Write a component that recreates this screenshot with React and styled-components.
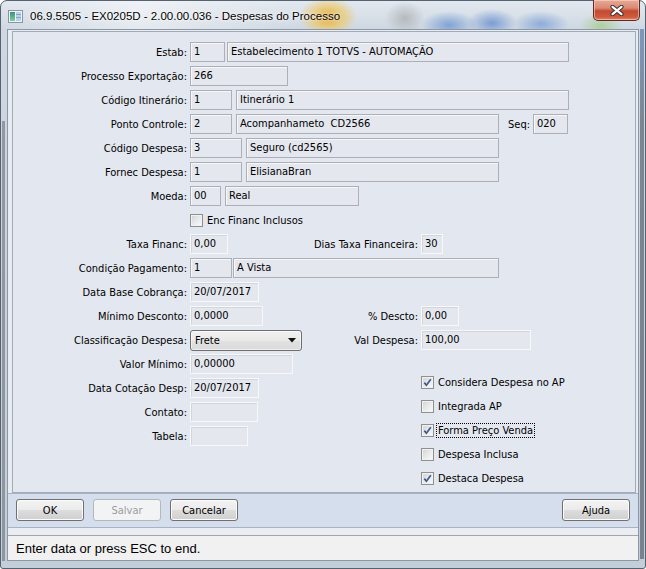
import React from 'react';
import styled, { createGlobalStyle, css } from 'styled-components';

const UI = `"DejaVu Sans Condensed", "Liberation Sans", sans-serif`;

const GlobalStyle = createGlobalStyle`
  html, body { margin: 0; padding: 0; background: #ffffff; }
  #root { width: 646px; height: 569px; }
`;

const Window = styled.div`
  box-sizing: border-box;
  width: 646px;
  height: 569px;
  border: 1px solid #56626f;
  border-radius: 7px 7px 3px 3px;
  display: flex;
  flex-direction: column;
  font-family: ${UI};
  font-size: 11px;
  color: #000;
  background:
    radial-gradient(closest-side, rgba(232, 168, 40, 0.95), rgba(240, 196, 80, 0.6) 55%, rgba(240, 196, 80, 0)) 298px -4px / 58px 40px no-repeat,
    radial-gradient(closest-side, rgba(150, 150, 150, 0.5), rgba(150, 150, 150, 0)) 384px 0px / 40px 34px no-repeat,
    radial-gradient(closest-side, rgba(74, 126, 204, 0.6), rgba(74, 126, 204, 0)) 420px 10px / 56px 28px no-repeat,
    radial-gradient(closest-side, rgba(64, 116, 198, 0.6), rgba(64, 116, 198, 0)) 466px 8px / 50px 28px no-repeat,
    radial-gradient(closest-side, rgba(84, 134, 206, 0.55), rgba(84, 134, 206, 0)) 512px 10px / 56px 26px no-repeat,
    radial-gradient(closest-side, rgba(150, 200, 110, 0.6), rgba(150, 200, 110, 0)) 578px 12px / 44px 26px no-repeat,
    linear-gradient(90deg, transparent 1px, rgba(96, 102, 110, 0.55) 1px, rgba(96, 102, 110, 0.55) 4px, transparent 4px) 0 120px / 7px 440px no-repeat,
    linear-gradient(180deg, rgba(70, 110, 170, 0.6), rgba(70, 78, 90, 0.6) 18%, rgba(70, 78, 90, 0.6)) 639px 28px / 4px 530px no-repeat,
    linear-gradient(90deg, rgba(255, 255, 255, 0) 0, rgba(255, 255, 255, 0.45) 22%, rgba(255, 255, 255, 0) 46%) 0 0 / 100% 28px no-repeat,
    linear-gradient(180deg, #e2e8ef 0, #cfd8e2 28px, #c4ced9 100%);
`;

const TitleBar = styled.div`
  height: 28px;
  flex: none;
  display: flex;
  align-items: center;
  padding-left: 7px;
  gap: 7px;
`;

const TitleText = styled.span`
  font-family: "Liberation Sans", sans-serif;
  font-size: 11.5px;
  color: #000;
  text-shadow: 0 0 5px rgba(255, 255, 255, 0.95), 0 0 2px rgba(255, 255, 255, 0.9);
  margin-top: 2px;
`;

const CloseButton = styled.div`
  align-self: flex-start;
  margin: -1px 5px 0 auto;
  box-sizing: border-box;
  width: 47px;
  height: 21px;
  border: 1px solid #5e2a22;
  border-top: none;
  border-radius: 0 0 5px 5px;
  background: linear-gradient(180deg, #e9a996 0%, #d98a74 40%, #c4492f 55%, #cf5b3f 85%, #e2866a 100%);
  box-shadow: inset 0 0 0 1px rgba(255, 220, 210, 0.55);
  display: flex;
  align-items: center;
  justify-content: center;
`;

const Client = styled.div`
  flex: 1;
  margin: 0 6px 7px 6px;
  border: 1px solid #8b97a6;
  background: #e8ebf0;
  display: flex;
  flex-direction: column;
  min-height: 0;
`;

const FormPanel = styled.div`
  box-sizing: border-box;
  height: 462px;
  flex: none;
  margin: 1px 2px 0 4px;
  border: 1px solid #a2aab5;
  background: #e3e7ef;
  padding-top: 10px;
  display: flex;
  flex-direction: column;
  gap: 4px;
`;

const Row = styled.div`
  display: grid;
  grid-template-columns: 174px 115px 110px 1fr;
  column-gap: 3px;
  align-items: center;
  height: 20px;
`;

const Label = styled.span`
  grid-column: ${(p) => (p.$right ? 3 : 1)};
  text-align: right;
  white-space: nowrap;
`;

const Fields = styled.div`
  grid-column: ${(p) => (p.$span ? '2 / 5' : '2')};
  display: flex;
  align-items: center;
  gap: ${(p) => (p.$gap !== undefined ? p.$gap : 4)}px;
  height: 20px;
`;

const RightField = styled.div`
  grid-column: 4;
  display: flex;
  align-items: center;
`;

const Input = styled.div`
  box-sizing: border-box;
  flex: none;
  width: ${(p) => p.$w}px;
  height: 20px;
  padding: 0 3px;
  line-height: 18px;
  white-space: pre;
  overflow: hidden;
  color: #000;
  background: #e4e7ee;
  ${(p) =>
    p.$light
      ? css`
          border: 1px solid #f7f8fa;
          box-shadow: inset 1px 1px 0 #d3d6dd;
        `
      : css`
          border: 1px solid #acafb6;
          box-shadow: inset 1px 1px 0 #f6f7f9;
        `}
`;

const SeqLabel = styled.span`
  margin-left: 5px;
  margin-right: -1px;
`;

const Select = styled.div`
  box-sizing: border-box;
  width: 112px;
  height: 21px;
  border: 1px solid #6f6f6f;
  border-radius: 3px;
  background: linear-gradient(180deg, #f1f1f1 0%, #e9e9e9 50%, #e1e1e1 51%, #dadada 100%);
  box-shadow: inset 0 0 0 1px rgba(255, 255, 255, 0.55);
  display: flex;
  align-items: center;
  justify-content: space-between;
  padding: 0 5px 0 4px;
`;

const CheckItem = styled.div`
  display: flex;
  align-items: center;
  gap: 3px;
  height: 20px;
`;

const CheckBox = styled.span`
  box-sizing: border-box;
  flex: none;
  width: 13px;
  height: 13px;
  border: 1px solid #8e8f8f;
  background: linear-gradient(135deg, #cfd1d4 0%, #e7e9eb 50%, #fafafa 100%);
  box-shadow: inset 0 0 0 1px #f2f2f2;
  display: flex;
  align-items: center;
  justify-content: center;
`;

const CheckText = styled.span`
  padding: 0 1px;
  line-height: 13px;
  border: 1px dotted ${(p) => (p.$focus ? '#000' : 'transparent')};
  margin-left: -1px;
  white-space: nowrap;
`;

const LowerSection = styled.div`
  display: grid;
  grid-template-columns: 405px 1fr;
  column-gap: 3px;
`;

const Column = styled.div`
  display: flex;
  flex-direction: column;
  gap: 4px;
  padding-top: ${(p) => p.$top || 0}px;
`;

const ButtonBar = styled.div`
  box-sizing: border-box;
  height: 35px;
  flex: none;
  border-top: 1px solid #a7b3c4;
  border-bottom: 1px solid #a7b3c4;
  background: #d5deed;
  display: flex;
  align-items: center;
  gap: 9px;
  padding: 0 8px;
`;

const Button = styled.button`
  box-sizing: border-box;
  width: 68px;
  height: 22px;
  margin-top: -1px;
  padding: 0;
  font-family: ${UI};
  font-size: 11px;
  color: #000;
  border: 1px solid #707070;
  border-radius: 3px;
  background: linear-gradient(180deg, #f3f3f3 0%, #ebebeb 49%, #dddddd 50%, #cfcfcf 100%);
  box-shadow: inset 0 0 0 1px #fbfbfb;
  margin-left: ${(p) => (p.$push ? 'auto' : '0')};
  ${(p) =>
    p.disabled &&
    css`
      color: #9c9c9c;
      border-color: #b4b8bb;
      background: #f2f3f4;
      box-shadow: none;
    `}
`;

const Strip = styled.div`
  height: 7px;
  flex: none;
  background: #eaedf1;
`;

const StatusBar = styled.div`
  flex: 1;
  border-top: 1px solid #a3a6aa;
  background: #f1f1f1;
  display: flex;
  align-items: center;
  padding: 1px 8px 0;
  font-family: "Liberation Sans", sans-serif;
  font-size: 13px;
  color: #000;
`;

const AppIcon = () => (
  <svg width="15" height="13" viewBox="0 0 15 13" style={{ flex: 'none', marginTop: 2 }}>
    <defs>
      <linearGradient id="ig" x1="0" y1="0" x2="0" y2="1">
        <stop offset="0" stopColor="#3b8e8a" />
        <stop offset="1" stopColor="#7fcf9a" />
      </linearGradient>
    </defs>
    <rect x="0.5" y="0.5" width="14" height="12" fill="#f2f5f8" stroke="#8a949e" />
    <rect x="2" y="2" width="5" height="9" fill="url(#ig)" />
    <rect x="8" y="2" width="5" height="9" fill="#b9d2ea" />
    <rect x="8" y="4" width="5" height="1" fill="#7fa6d0" />
    <rect x="8" y="7" width="5" height="1" fill="#7fa6d0" />
  </svg>
);

const CloseGlyph = () => (
  <svg width="14" height="11" viewBox="0 0 14 11">
    <path d="M2.5 1.8 L11.5 9.2 M11.5 1.8 L2.5 9.2" stroke="#3b3030" strokeWidth="4.2" strokeLinecap="round" />
    <path d="M2.5 1.8 L11.5 9.2 M11.5 1.8 L2.5 9.2" stroke="#ffffff" strokeWidth="2.2" strokeLinecap="round" />
  </svg>
);

const Check = () => (
  <svg width="9" height="9" viewBox="0 0 9 9">
    <path d="M1.3 4.6 L3.4 7.2 L7.8 1.2" fill="none" stroke="#3f5794" strokeWidth="1.7" />
  </svg>
);

const Arrow = () => (
  <svg width="8" height="5" viewBox="0 0 8 5">
    <path d="M0 0 H8 L4 4.5 Z" fill="#111" />
  </svg>
);

const CheckField = ({ checked, focus, children }) => (
  <CheckItem>
    <CheckBox>{checked && <Check />}</CheckBox>
    <CheckText $focus={focus}>{children}</CheckText>
  </CheckItem>
);

export default function App() {
  return (
    <>
      <GlobalStyle />
      <Window>
        <TitleBar>
          <AppIcon />
          <TitleText>06.9.5505 - EX0205D - 2.00.00.036 - Despesas do Processo</TitleText>
          <CloseButton>
            <CloseGlyph />
          </CloseButton>
        </TitleBar>
        <Client>
          <FormPanel>
            <Row>
              <Label>Estab:</Label>
              <Fields $span $gap={2}>
                <Input $w={35}>1</Input>
                <Input $w={342}>Estabelecimento 1 TOTVS - AUTOMAÇÃO</Input>
              </Fields>
            </Row>
            <Row>
              <Label>Processo Exportação:</Label>
              <Fields $span>
                <Input $w={98}>266</Input>
              </Fields>
            </Row>
            <Row>
              <Label>Código Itinerário:</Label>
              <Fields $span>
                <Input $w={42}>1</Input>
                <Input $w={333}>Itinerário 1</Input>
              </Fields>
            </Row>
            <Row>
              <Label>Ponto Controle:</Label>
              <Fields $span>
                <Input $w={42}>2</Input>
                <Input $w={263}>Acompanhameto  CD2566</Input>
                <SeqLabel>Seq:</SeqLabel>
                <Input $w={35}>020</Input>
              </Fields>
            </Row>
            <Row>
              <Label>Código Despesa:</Label>
              <Fields $span>
                <Input $w={52}>3</Input>
                <Input $w={253}>Seguro (cd2565)</Input>
              </Fields>
            </Row>
            <Row>
              <Label>Fornec Despesa:</Label>
              <Fields $span>
                <Input $w={52}>1</Input>
                <Input $w={253}>ElisianaBran</Input>
              </Fields>
            </Row>
            <Row>
              <Label>Moeda:</Label>
              <Fields $span>
                <Input $w={31}>00</Input>
                <Input $w={134}>Real</Input>
              </Fields>
            </Row>
            <Row>
              <Fields $span>
                <CheckField>Enc Financ Inclusos</CheckField>
              </Fields>
            </Row>
            <Row>
              <Label>Taxa Financ:</Label>
              <Fields>
                <Input $w={38} $light>0,00</Input>
              </Fields>
              <Label $right>Dias Taxa Financeira:</Label>
              <RightField>
                <Input $w={22} $light>30</Input>
              </RightField>
            </Row>
            <Row>
              <Label>Condição Pagamento:</Label>
              <Fields $span $gap={1}>
                <Input $w={42}>1</Input>
                <Input $w={266}>A Vista</Input>
              </Fields>
            </Row>
            <Row>
              <Label>Data Base Cobrança:</Label>
              <Fields $span>
                <Input $w={69} $light>20/07/2017</Input>
              </Fields>
            </Row>
            <Row>
              <Label>Mínimo Desconto:</Label>
              <Fields>
                <Input $w={73} $light>0,0000</Input>
              </Fields>
              <Label $right>% Descto:</Label>
              <RightField>
                <Input $w={38} $light>0,00</Input>
              </RightField>
            </Row>
            <Row>
              <Label>Classificação Despesa:</Label>
              <Fields>
                <Select>
                  <span>Frete</span>
                  <Arrow />
                </Select>
              </Fields>
              <Label $right>Val Despesa:</Label>
              <RightField>
                <Input $w={110} $light>100,00</Input>
              </RightField>
            </Row>
            <LowerSection>
              <Column>
                <Row>
                  <Label>Valor Mínimo:</Label>
                  <Fields $span>
                    <Input $w={103} $light>0,00000</Input>
                  </Fields>
                </Row>
                <Row>
                  <Label>Data Cotação Desp:</Label>
                  <Fields $span>
                    <Input $w={69} $light>20/07/2017</Input>
                  </Fields>
                </Row>
                <Row>
                  <Label>Contato:</Label>
                  <Fields $span>
                    <Input $w={68} $light />
                  </Fields>
                </Row>
                <Row>
                  <Label>Tabela:</Label>
                  <Fields $span>
                    <Input $w={58} $light />
                  </Fields>
                </Row>
              </Column>
              <Column $top={18}>
                <CheckField checked>Considera Despesa no AP</CheckField>
                <CheckField>Integrada AP</CheckField>
                <CheckField checked focus>Forma Preço Venda</CheckField>
                <CheckField>Despesa Inclusa</CheckField>
                <CheckField checked>Destaca Despesa</CheckField>
              </Column>
            </LowerSection>
          </FormPanel>
          <ButtonBar>
            <Button>OK</Button>
            <Button disabled>Salvar</Button>
            <Button>Cancelar</Button>
            <Button $push>Ajuda</Button>
          </ButtonBar>
          <Strip />
          <StatusBar>Enter data or press ESC to end.</StatusBar>
        </Client>
      </Window>
    </>
  );
}
